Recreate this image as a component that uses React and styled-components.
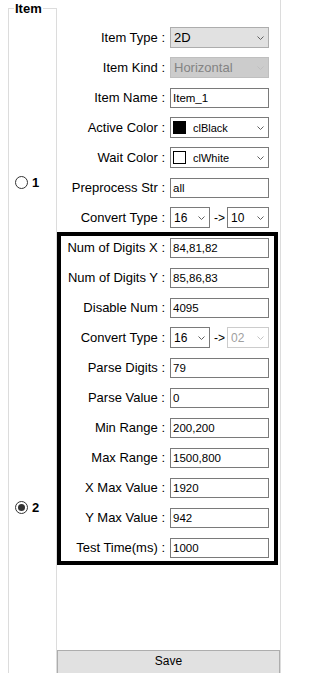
import React from "react";
import styled, { createGlobalStyle } from "styled-components";

const Global = createGlobalStyle`
  html, body { margin: 0; padding: 0; background: #ffffff; overflow: hidden; }
  body { font-family: "Liberation Sans", Arial, sans-serif; font-size: 12px; color: #000; }
  #root { height: 673px; }
`;

const Window = styled.div`
  display: flex;
  height: 673px;
  padding-left: 8px;
  box-sizing: border-box;
  overflow: hidden;
`;

const GroupBox = styled.fieldset`
  margin: 0;
  padding: 0;
  width: 49px;
  min-width: 0;
  height: 740px;
  flex: none;
  box-sizing: border-box;
  border: 1px solid #dcdcdc;
  display: flex;
  flex-direction: column;
  align-items: flex-start;
`;

const Caption = styled.legend`
  margin-left: 5px;
  padding: 0 1px;
  font-size: 13px;
  font-weight: bold;
  line-height: 17px;
`;

const RadioRow = styled.label`
  display: flex;
  align-items: center;
  gap: 4px;
  margin-left: 6px;
  margin-top: ${(p) => p.$top}px;
  height: 13px;
  font-size: 13px;
  font-weight: bold;
`;

const RadioCircle = styled.span`
  width: 13px;
  height: 13px;
  box-sizing: border-box;
  border: 1px solid #333333;
  border-radius: 50%;
  background: #ffffff;
  display: flex;
  align-items: center;
  justify-content: center;
  &::after {
    content: "";
    width: 7px;
    height: 7px;
    border-radius: 50%;
    background: ${(p) => (p.$checked ? "#333333" : "transparent")};
  }
`;

const Panel = styled.div`
  width: 224px;
  height: 674px;
  flex: none;
  box-sizing: border-box;
  border-right: 1px solid #dcdcdc;
  display: flex;
  flex-direction: column;
  padding-top: 27px;
`;

const Form = styled.div`
  display: flex;
  flex-direction: column;
  gap: 9px;
  padding-right: 11px;
`;

const Box = styled.div`
  margin-top: 4px;
  width: 221px;
  box-sizing: border-box;
  border: 4px solid #000000;
  display: flex;
  flex-direction: column;
  gap: 9px;
  padding: 1px 5px 3px 0;
`;

const Row = styled.div`
  display: flex;
  align-items: center;
  justify-content: flex-end;
  gap: 5px;
  height: 21px;
`;

const Label = styled.span`
  white-space: nowrap;
  font-size: 13px;
  line-height: 15px;
`;

const TextBox = styled.div`
  width: 99px;
  height: 20px;
  box-sizing: border-box;
  border: 1px solid #7a7a7a;
  background: #ffffff;
  padding-left: 2px;
  display: flex;
  align-items: center;
  font-size: 11.5px;
  white-space: nowrap;
`;

const comboSkins = {
  list: { bg: "#e1e1e1", border: "#adadad", color: "#000000", arrow: "#606060" },
  disabledList: { bg: "#cccccc", border: "#bfbfbf", color: "#838383", arrow: "#bfbfbf" },
  edit: { bg: "#ffffff", border: "#7a7a7a", color: "#000000", arrow: "#606060" },
  disabledEdit: { bg: "#ffffff", border: "#cccccc", color: "#a0a0a0", arrow: "#c4c4c4" },
};

const Combo = styled.div`
  width: ${(p) => p.$w}px;
  height: 21px;
  box-sizing: border-box;
  border: 1px solid ${(p) => comboSkins[p.$skin].border};
  background: ${(p) => comboSkins[p.$skin].bg};
  color: ${(p) => comboSkins[p.$skin].color};
  display: flex;
  align-items: center;
  padding-left: ${(p) => (p.$swatch ? 2 : 3)}px;
  padding-right: 4px;
  font-size: ${(p) => (p.$skin === "list" || p.$skin === "disabledList" ? 13 : 12)}px;
  white-space: nowrap;
`;

const ComboText = styled.span`
  flex: 1;
  overflow: hidden;
  font-size: ${(p) => (p.$small ? "11px" : "inherit")};
`;

const Swatch = styled.span`
  width: 13px;
  height: 13px;
  box-sizing: border-box;
  border: 1px solid #000000;
  background: ${(p) => p.$fill};
  margin-right: 7px;
  flex: none;
`;

const Pair = styled.div`
  width: 99px;
  display: flex;
  align-items: center;
  justify-content: space-between;
`;

const Arrow = styled.span`
  font-size: 12px;
  margin-left: 2px;
`;

const SaveButton = styled.button`
  margin-top: auto;
  height: 24px;
  width: 100%;
  box-sizing: border-box;
  border: 1px solid #adadad;
  background: #e1e1e1;
  font-family: "Liberation Sans", Arial, sans-serif;
  font-size: 12px;
  color: #000;
  padding: 0 0 2px;
`;

const Chevron = ({ color }) => (
  <svg width="7" height="4" viewBox="0 0 7 4" style={{ flex: "none" }}>
    <polyline points="0.5,0.5 3.5,3.5 6.5,0.5" fill="none" stroke={color} strokeWidth="1" />
  </svg>
);

const ComboBox = ({ skin = "edit", w = 99, children, swatch, small }) => (
  <Combo $skin={skin} $w={w} $swatch={!!swatch}>
    {swatch && <Swatch $fill={swatch} />}
    <ComboText $small={small}>{children}</ComboText>
    <Chevron color={comboSkins[skin].arrow} />
  </Combo>
);

const Field = ({ label, children }) => (
  <Row>
    <Label>{label}</Label>
    {children}
  </Row>
);

const ConvertPair = ({ from, to, toDisabled }) => (
  <Pair>
    <ComboBox w={40}>{from}</ComboBox>
    <Arrow>-&gt;</Arrow>
    <ComboBox w={42} skin={toDisabled ? "disabledEdit" : "edit"}>{to}</ComboBox>
  </Pair>
);

const boxFields = [
  ["Num of Digits X :", "84,81,82"],
  ["Num of Digits Y :", "85,86,83"],
  ["Disable Num :", "4095"],
  ["Convert Type :", null],
  ["Parse Digits :", "79"],
  ["Parse Value :", "0"],
  ["Min Range :", "200,200"],
  ["Max Range :", "1500,800"],
  ["X Max Value :", "1920"],
  ["Y Max Value :", "942"],
  ["Test Time(ms) :", "1000"],
];

export default function App() {
  return (
    <>
      <Global />
      <Window>
        <GroupBox>
          <Caption>Item</Caption>
          <RadioRow $top={159}>
            <RadioCircle />
            1
          </RadioRow>
          <RadioRow $top={312}>
            <RadioCircle $checked />
            2
          </RadioRow>
        </GroupBox>
        <Panel>
          <Form>
            <Field label="Item Type :">
              <ComboBox skin="list">2D</ComboBox>
            </Field>
            <Field label="Item Kind :">
              <ComboBox skin="disabledList">Horizontal</ComboBox>
            </Field>
            <Field label="Item Name :">
              <TextBox>Item_1</TextBox>
            </Field>
            <Field label="Active Color :">
              <ComboBox swatch="#000000" small>clBlack</ComboBox>
            </Field>
            <Field label="Wait Color :">
              <ComboBox swatch="#ffffff" small>clWhite</ComboBox>
            </Field>
            <Field label="Preprocess Str :">
              <TextBox>all</TextBox>
            </Field>
            <Field label="Convert Type :">
              <ConvertPair from="16" to="10" />
            </Field>
          </Form>
          <Box>
            {boxFields.map(([label, value]) => (
              <Field key={label} label={label}>
                {value === null ? (
                  <ConvertPair from="16" to="02" toDisabled />
                ) : (
                  <TextBox>{value}</TextBox>
                )}
              </Field>
            ))}
          </Box>
          <SaveButton>Save</SaveButton>
        </Panel>
      </Window>
    </>
  );
}
